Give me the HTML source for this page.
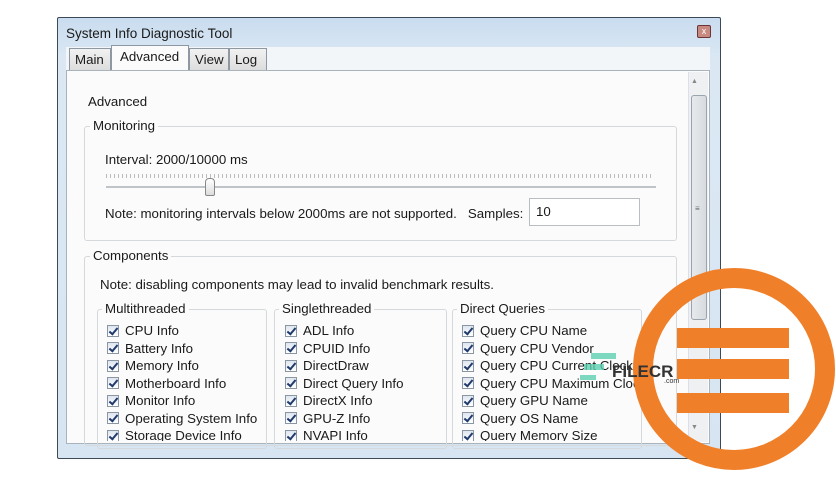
<!DOCTYPE html>
<html><head><style>
*{margin:0;padding:0;box-sizing:border-box}
body{width:836px;height:484px;background:#fff;position:relative;overflow:hidden;font-family:"Liberation Sans",sans-serif;font-size:13.3px;color:#1a1a1a}
.a{position:absolute}
.win{left:57px;top:17px;width:664px;height:442px;border:1px solid #3c4a55;background:linear-gradient(#c9dcef,#dbe8f4 40px,#d7e5f2);border-radius:2px}
.pane{left:66px;top:70px;width:644px;height:374px;background:#fbfbfb;border:1px solid #a9b3bc}
.tab{top:48px;height:23px;border:1px solid #8d98a3;border-bottom:none;background:linear-gradient(#f2f2f2,#dcdcdc);padding:3px 5px 0;font-size:13.3px}
.grp{border:1px solid #d5d9dc;border-radius:3px}
.lg{background:#fbfbfb;padding:0 3px;font-size:13.3px}
.cb{display:flex;align-items:center;height:17.5px;font-size:13.3px;white-space:nowrap}
.cb i{display:inline-block;width:12px;height:12px;border:1px solid #8a96a3;background:linear-gradient(#dfe6f0,#fff);margin-right:6px;position:relative}
.cb i:after{content:"";position:absolute;left:3px;top:0px;width:3px;height:7px;border:solid #1f3a6b;border-width:0 2px 2px 0;transform:rotate(40deg)}
.clip{overflow:hidden}
</style></head><body>
<div class="a win"></div>
<div class="a" style="left:66px;top:26px;font-size:13.5px">System Info Diagnostic Tool</div>
<div class="a" style="left:697px;top:25px;width:14px;height:13px;border:1px solid #6b3535;background:#c88a80;border-radius:2px;color:#fff;font-size:9px;text-align:center;line-height:11px">x</div>
<div class="a" style="left:66px;top:47px;width:644px;height:24px;background:#f3f6f9"></div>
<div class="a tab" style="left:69px;width:42px">Main</div>
<div class="a tab" style="left:111px;top:45px;height:26px;width:78px;background:#fbfbfb;padding-left:8px">Advanced</div>
<div class="a tab" style="left:189px;width:40px">View</div>
<div class="a tab" style="left:229px;width:38px">Log</div>
<div class="a pane"></div>
<div class="a" style="left:88px;top:94px">Advanced</div>
<div class="a grp" style="left:84px;top:126px;width:593px;height:115px"></div>
<div class="a lg" style="left:90px;top:118px">Monitoring</div>
<div class="a" style="left:105px;top:152px">Interval: 2000/10000 ms</div>
<div class="a" style="left:106px;top:174px;width:548px;height:4px;background:repeating-linear-gradient(90deg,#bbb 0 1px,transparent 1px 4px)"></div>
<div class="a" style="left:106px;top:186px;width:550px;height:2px;background:#bfc4c8"></div>
<div class="a" style="left:205px;top:178px;width:10px;height:18px;border:1px solid #888;border-radius:4px 4px 2px 2px;background:linear-gradient(#fff,#ddd)"></div>
<div class="a" style="left:105px;top:206px">Note: monitoring intervals below 2000ms are not supported.&nbsp;&nbsp; Samples:</div>
<div class="a" style="left:529px;top:198px;width:111px;height:28px;border:1px solid #b9bec3;background:#fff;padding:5px 6px">10</div>
<div class="a grp clip" style="left:84px;top:256px;width:593px;height:190px"></div>
<div class="a lg" style="left:90px;top:248px">Components</div>
<div class="a" style="left:100px;top:277px">Note: disabling components may lead to invalid benchmark results.</div>
<div class="a grp" style="left:97px;top:309px;width:170px;height:140px"></div>
<div class="a grp" style="left:274px;top:309px;width:173px;height:140px"></div>
<div class="a grp" style="left:452px;top:309px;width:190px;height:140px"></div>
<div class="a lg" style="left:102px;top:301px">Multithreaded</div>
<div class="a lg" style="left:279px;top:301px">Singlethreaded</div>
<div class="a lg" style="left:457px;top:301px">Direct Queries</div>
<div class="a clip" style="left:100px;top:322px;width:540px;height:119px">
<div class="a" style="left:7px;top:0">
<div class="cb"><i></i>CPU Info</div><div class="cb"><i></i>Battery Info</div><div class="cb"><i></i>Memory Info</div><div class="cb"><i></i>Motherboard Info</div><div class="cb"><i></i>Monitor Info</div><div class="cb"><i></i>Operating System Info</div><div class="cb"><i></i>Storage Device Info</div></div>
<div class="a" style="left:185px;top:0">
<div class="cb"><i></i>ADL Info</div><div class="cb"><i></i>CPUID Info</div><div class="cb"><i></i>DirectDraw</div><div class="cb"><i></i>Direct Query Info</div><div class="cb"><i></i>DirectX Info</div><div class="cb"><i></i>GPU-Z Info</div><div class="cb"><i></i>NVAPI Info</div></div>
<div class="a" style="left:362px;top:0">
<div class="cb"><i></i>Query CPU Name</div><div class="cb"><i></i>Query CPU Vendor</div><div class="cb"><i></i>Query CPU Current Clock</div><div class="cb"><i></i>Query CPU Maximum Clock</div><div class="cb"><i></i>Query GPU Name</div><div class="cb"><i></i>Query OS Name</div><div class="cb"><i></i>Query Memory Size</div></div>
</div>
<div class="a" style="left:688px;top:72px;width:20px;height:370px;background:#eef0f2;border-left:1px solid #dde"></div>
<div class="a" style="left:691px;top:78px;font-size:7px;color:#888">▲</div>
<div class="a" style="left:691px;top:95px;width:16px;height:225px;border:1px solid #9aa4ae;border-radius:3px;background:linear-gradient(90deg,#e6e9ec,#d7dbdf)"></div>
<div class="a" style="left:695px;top:204px;font-size:8px;color:#666">≡</div>
<div class="a" style="left:691px;top:424px;font-size:7px;color:#888">▼</div>
<svg class="a" style="left:0;top:0" width="836" height="484">
<circle cx="734" cy="369" r="91" fill="none" stroke="#f07f2a" stroke-width="20"/>
<rect x="677" y="328" width="112" height="20" fill="#f07f2a"/>
<rect x="677" y="359" width="112" height="20" fill="#f07f2a"/>
<rect x="677" y="393" width="112" height="20" fill="#f07f2a"/>
<rect x="591" y="353" width="25" height="6" fill="#5ccfb0" opacity=".8"/>
<rect x="584" y="364" width="20" height="6" fill="#5ccfb0" opacity=".8"/>
<rect x="580" y="375" width="16" height="5" fill="#5ccfb0" opacity=".8"/>
<text x="612" y="377" font-family="Liberation Sans" font-weight="bold" font-size="17" fill="#333">FILECR</text>
<text x="664" y="383" font-family="Liberation Sans" font-size="7" fill="#333">.com</text>
</svg>
</body></html>
